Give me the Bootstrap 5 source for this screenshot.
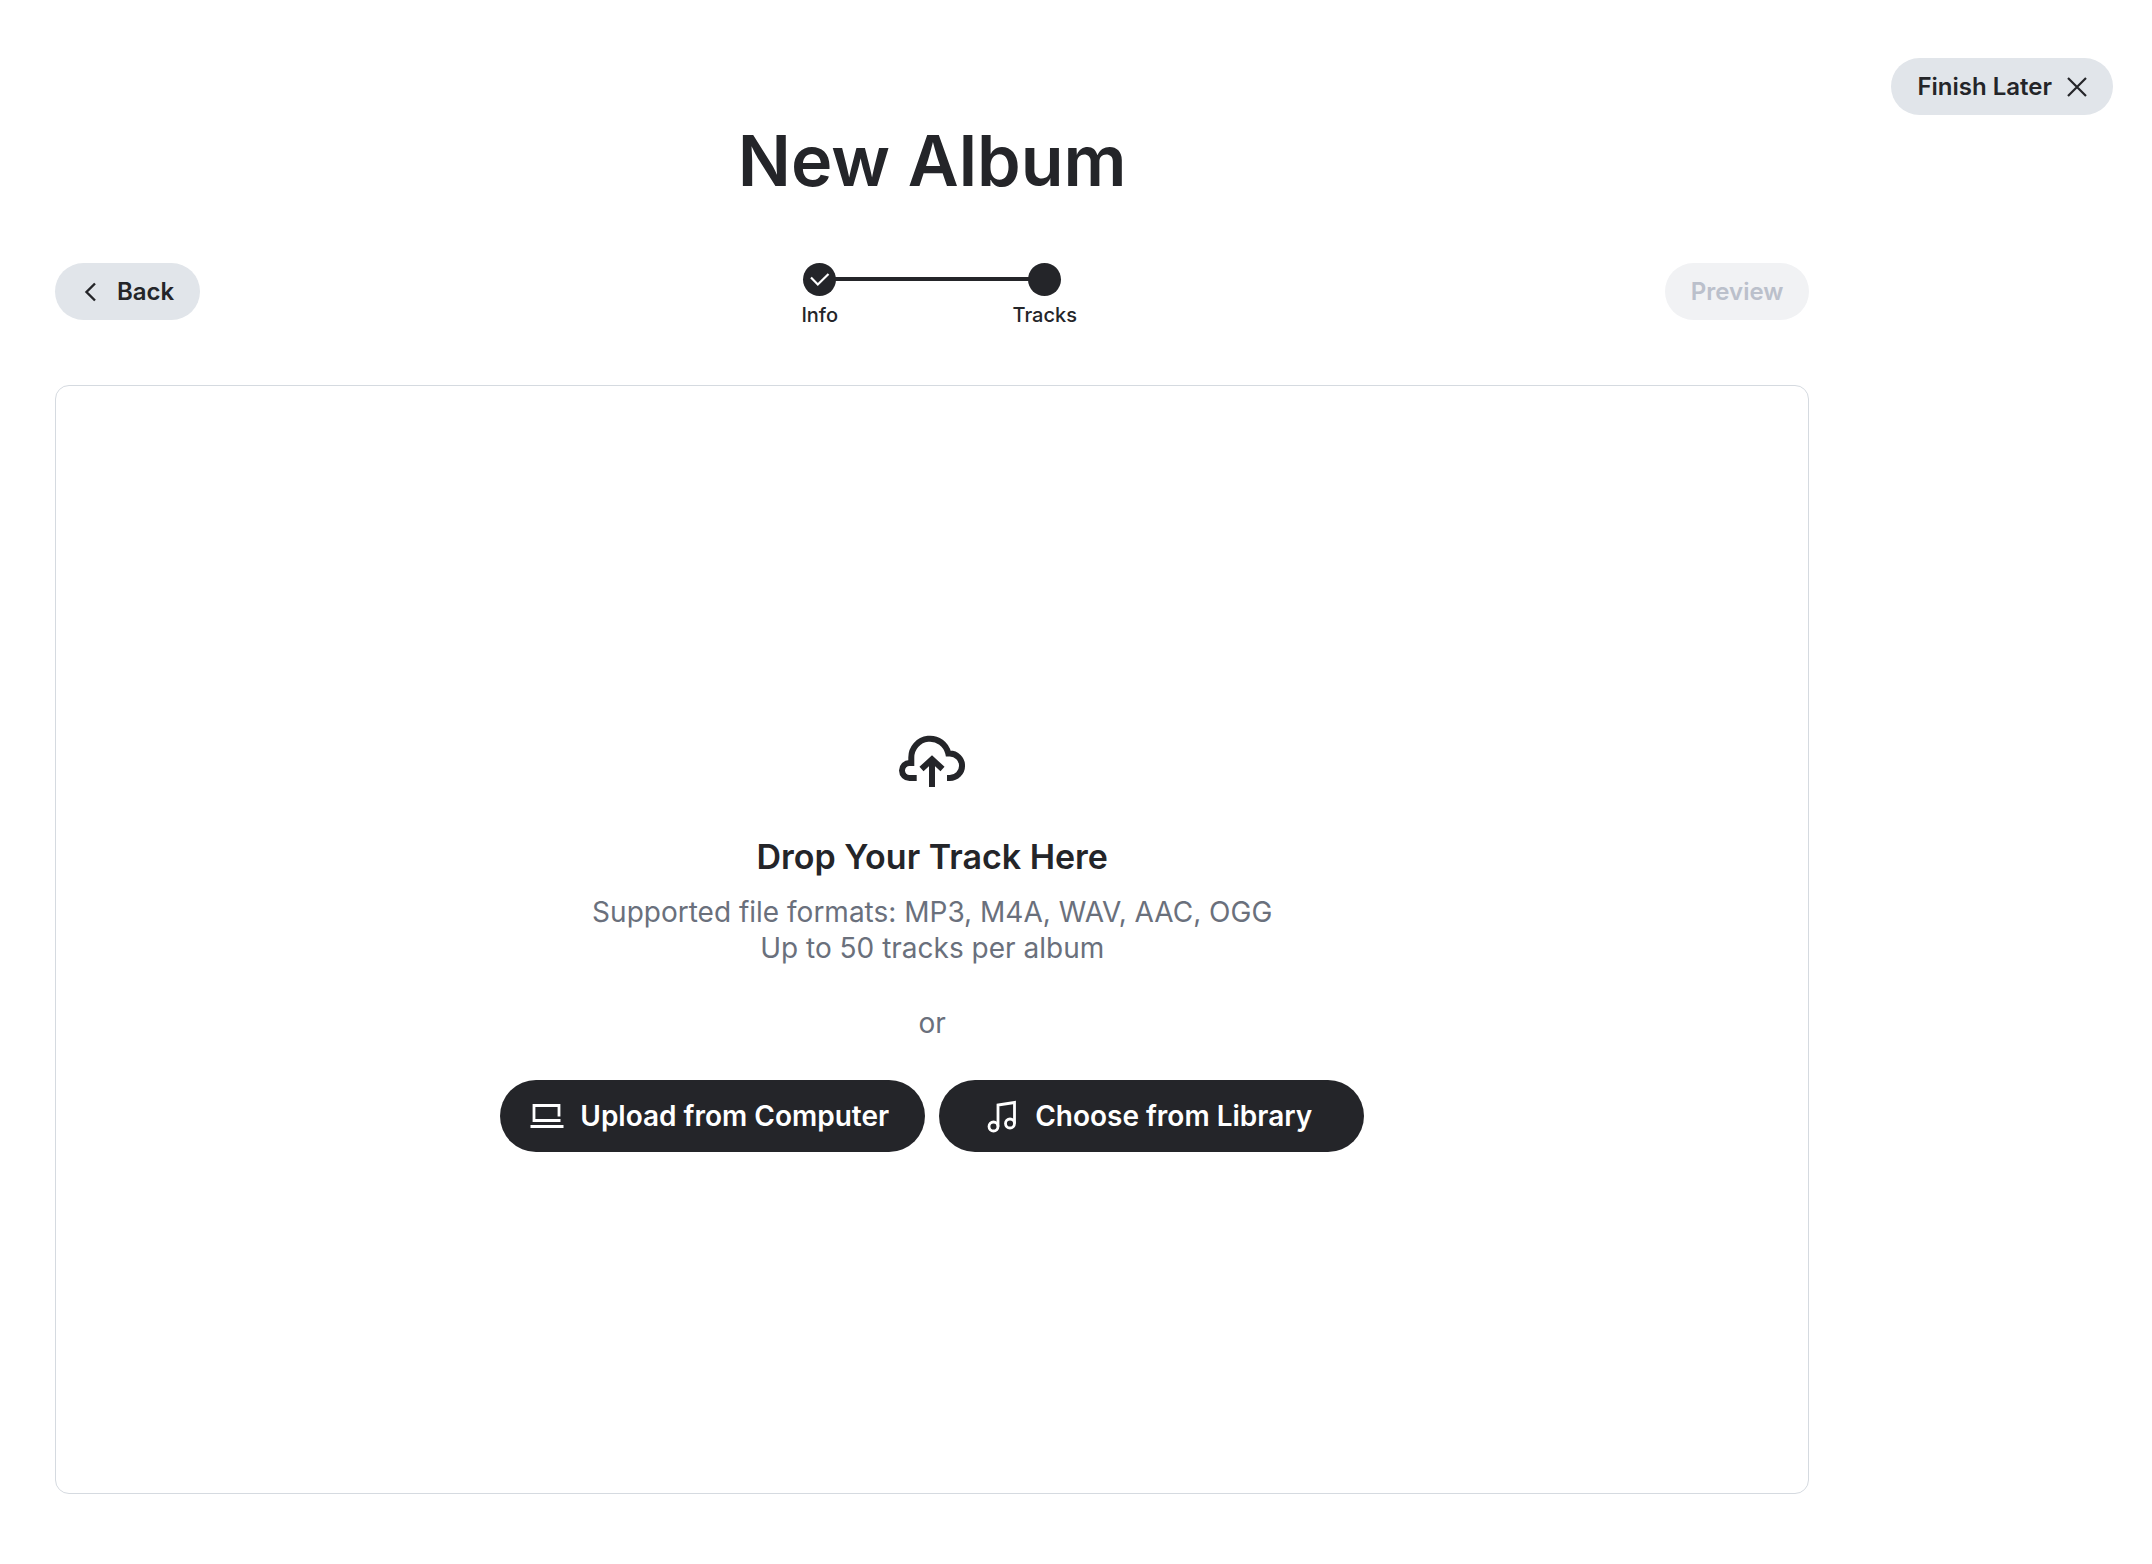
<!DOCTYPE html>
<html lang="en">
<head>
<meta charset="utf-8">
<meta name="viewport" content="width=device-width, initial-scale=1">
<title>New Album</title>
<link href="https://cdn.jsdelivr.net/npm/bootstrap@5.3.0/dist/css/bootstrap.min.css" rel="stylesheet">
<style>
  :root { --ink: #242529; --soft: #e1e5ea; --muted: #6a707c; --line: #d5dae0; }
  body { font-family: Inter, "Liberation Sans", sans-serif; color: var(--ink); background: #fff; }
  .album-main { padding: 116px 0 70px 55px; }
  .album-side { padding: 58px 39px 0 82px; }
  .album-title { font-size: 70px; line-height: 90px; font-weight: 600; margin-bottom: 57px; }
  .btn-pill { --bs-btn-color: var(--ink); --bs-btn-bg: var(--soft); --bs-btn-border-width: 0; --bs-btn-border-radius: 36px;
    --bs-btn-hover-bg: #d3d8df; --bs-btn-hover-color: var(--ink); --bs-btn-disabled-bg: #f1f2f4; --bs-btn-disabled-color: #bbc0cb;
    --bs-btn-disabled-opacity: 1; --bs-btn-font-weight: 600; --bs-btn-font-size: 24px; --bs-btn-padding-x: 26px; --bs-btn-padding-y: 0;
    height: 57px; display: inline-flex; align-items: center; justify-content: center; white-space: nowrap; gap: 16px; }
  .btn-finish { gap: 15px; }
  .btn-fill { --bs-btn-color: #fff; --bs-btn-bg: var(--ink); --bs-btn-hover-bg: #3a3b40; --bs-btn-hover-color: #fff;
    --bs-btn-font-size: 28px; height: 72px; width: 425px; padding: 0 32px 0 26px; }
  .steps-head { margin-bottom: 60px; height: 62px; }
  .step-item { width: 225px; }
  .step-dot { width: 33px; height: 33px; background: var(--ink); z-index: 1; }
  .step-item + .step-item::before { content: ""; position: absolute; top: 14px; right: 50%; width: 100%; height: 4px; background: var(--ink); }
  .step-name { font-size: 20px; line-height: 24px; margin-top: 7px; font-weight: 500; }
  .drop-card { border: 1px solid var(--line); border-radius: 14px; }
  .drop-title { font-size: 34px; line-height: 44px; font-weight: 600; margin: 35px 0 15px; }
  .drop-text { font-size: 28px; line-height: 36px; color: var(--muted); margin-bottom: 39px; }
  .btn-row { gap: 14px; }
</style>
<script src="https://cdn.jsdelivr.net/npm/bootstrap@5.3.0/dist/js/bootstrap.bundle.min.js" defer></script>
</head>
<body>
<div class="d-flex min-vh-100">
  <main class="album-main flex-grow-1 d-flex flex-column">
    <h1 class="album-title text-center">New Album</h1>
    <div class="steps-head row g-0 align-items-start">
      <div class="col">
        <button type="button" class="btn btn-pill">
          <svg width="20" height="20" viewBox="0 0 20 20" fill="none" stroke="currentColor" stroke-width="2.4" aria-hidden="true"><path d="M14 1.500 5.500 10l8.500 8.500"/></svg>
          Back
        </button>
      </div>
      <ol class="col-auto list-unstyled d-flex mb-0">
        <li class="step-item position-relative d-flex flex-column align-items-center">
          <span class="step-dot rounded-circle d-flex">
            <svg width="33" height="33" viewBox="0 0 33 33" fill="none" stroke="#fff" stroke-width="2.200" aria-hidden="true"><path d="m8 14.500 6.800 7L25.500 11"/></svg>
          </span>
          <span class="step-name">Info</span>
        </li>
        <li class="step-item position-relative d-flex flex-column align-items-center">
          <span class="step-dot rounded-circle"></span>
          <span class="step-name">Tracks</span>
        </li>
      </ol>
      <div class="col text-end">
        <button type="button" class="btn btn-pill" disabled>Preview</button>
      </div>
    </div>
    <section class="drop-card flex-grow-1 d-flex flex-column align-items-center justify-content-center text-center">
      <svg width="72" height="72" viewBox="0 0 72 72" fill="none" stroke="#242529" stroke-width="6" aria-hidden="true"><path d="M20.700 50H13.500a7.500 7.500 0 0 1 0-15H15.300V29.500A18.700 18.700 0 0 1 52.300 25.500h1.500a12.200 12.200 0 0 1 0 24.500H51M36 59V32M25.500 41 36 31.300l10.500 9.700"/></svg>
      <h2 class="drop-title">Drop Your Track Here</h2>
      <p class="drop-text">Supported file formats: MP3, M4A, WAV, AAC, OGG<br>Up to 50 tracks per album</p>
      <p class="drop-text">or</p>
      <div class="btn-row d-flex">
        <button type="button" class="btn btn-pill btn-fill">
          <svg width="34" height="34" viewBox="0 0 34 34" fill="none" stroke="currentColor" stroke-width="2.800" aria-hidden="true"><path d="M29 17.500V6.500H4V21.500h26.500M.5 27.500h33"/></svg>
          Upload from Computer
        </button>
        <button type="button" class="btn btn-pill btn-fill">
          <svg width="34" height="34" viewBox="0 0 34 34" fill="none" stroke="currentColor" stroke-width="2.800" aria-hidden="true"><circle cx="8.500" cy="27.500" r="4.500"/><circle cx="25" cy="24.500" r="4.500"/><path d="M13 27.500V6L29.500 3.500v21"/></svg>
          Choose from Library
        </button>
      </div>
    </section>
  </main>
  <aside class="album-side">
    <button type="button" class="btn btn-pill btn-finish">Finish Later
      <svg width="20" height="20" viewBox="0 0 20 20" fill="none" stroke="currentColor" stroke-width="2.200" aria-hidden="true"><path d="m1 1 18 18M19 1 1 19"/></svg>
    </button>
  </aside>
</div>
</body>
</html>
